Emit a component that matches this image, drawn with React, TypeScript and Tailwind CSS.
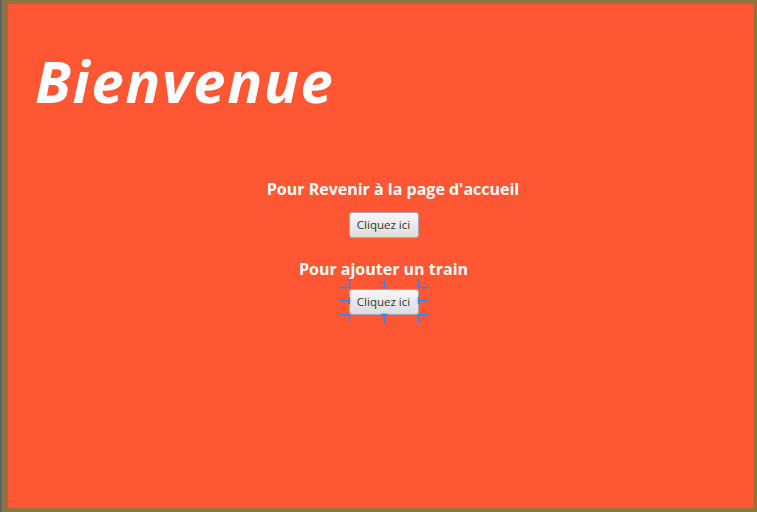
import React from 'react';

const font = { fontFamily: '"Open Sans", "Noto Sans", sans-serif' };

// selection marks drawn around the selected button (Scene Builder style)
function Handles() {
  const segs = [
    // top row
    'M0 9.5H10.5', 'M10.5 1V10', 'M45.5 1V10', 'M42 9.5H49', 'M79.5 9.5H90', 'M79.5 1V10',
    // middle row
    'M0 22.5H10.5', 'M10.5 19V26', 'M79.5 22.5H90', 'M79.5 19V26',
    // bottom row
    'M0 36.5H10.5', 'M10.5 36V45', 'M45.5 36V45', 'M42 36.5H49', 'M79.5 36.5H90', 'M79.5 36V45',
  ];
  return (
    <svg
      className="absolute left-[-10px] top-[-10px] pointer-events-none"
      width="90"
      height="46"
      viewBox="0 0 90 46"
    >
      {segs.map((d) => (
        <path key={d} d={d} stroke="#3584f4" strokeWidth="1.6" fill="none" />
      ))}
    </svg>
  );
}

function FxButton({ selected }: { selected?: boolean }) {
  return (
    <div className="relative w-[70px] h-[26px]">
      <button className="w-full h-full rounded-[3px] border border-[#a9a9a9] bg-gradient-to-b from-[#f7f7f7] to-[#dcdcdc] text-[11.5px] text-[#333] leading-none">
        Cliquez ici
      </button>
      {selected && <Handles />}
    </div>
  );
}

export default function App() {
  return (
    <div
      className="w-[757px] h-[512px] bg-[#8d7440] border-l-2 border-[#5f6266] pl-[6px] pt-[4px] pr-[3px] pb-[4px]"
      style={font}
    >
      <div className="h-full bg-[#ff5733] flex flex-col">
        <h1 className="ml-[27px] mt-[48px] text-[58px] leading-[58px] font-bold italic tracking-[1.6px] text-white">
          Bienvenue
        </h1>

        <div className="flex flex-col items-center pl-[5px] mt-[68px] text-white">
          <p className="ml-[19px] text-[16px] leading-[22px] font-bold">
            Pour Revenir à la page d'accueil
          </p>
          <div className="mt-[11px]">
            <FxButton />
          </div>
          <p className="mt-[21px] text-[16px] leading-[22px] font-bold">Pour ajouter un train</p>
          <div className="mt-[8px]">
            <FxButton selected />
          </div>
        </div>
      </div>
    </div>
  );
}
